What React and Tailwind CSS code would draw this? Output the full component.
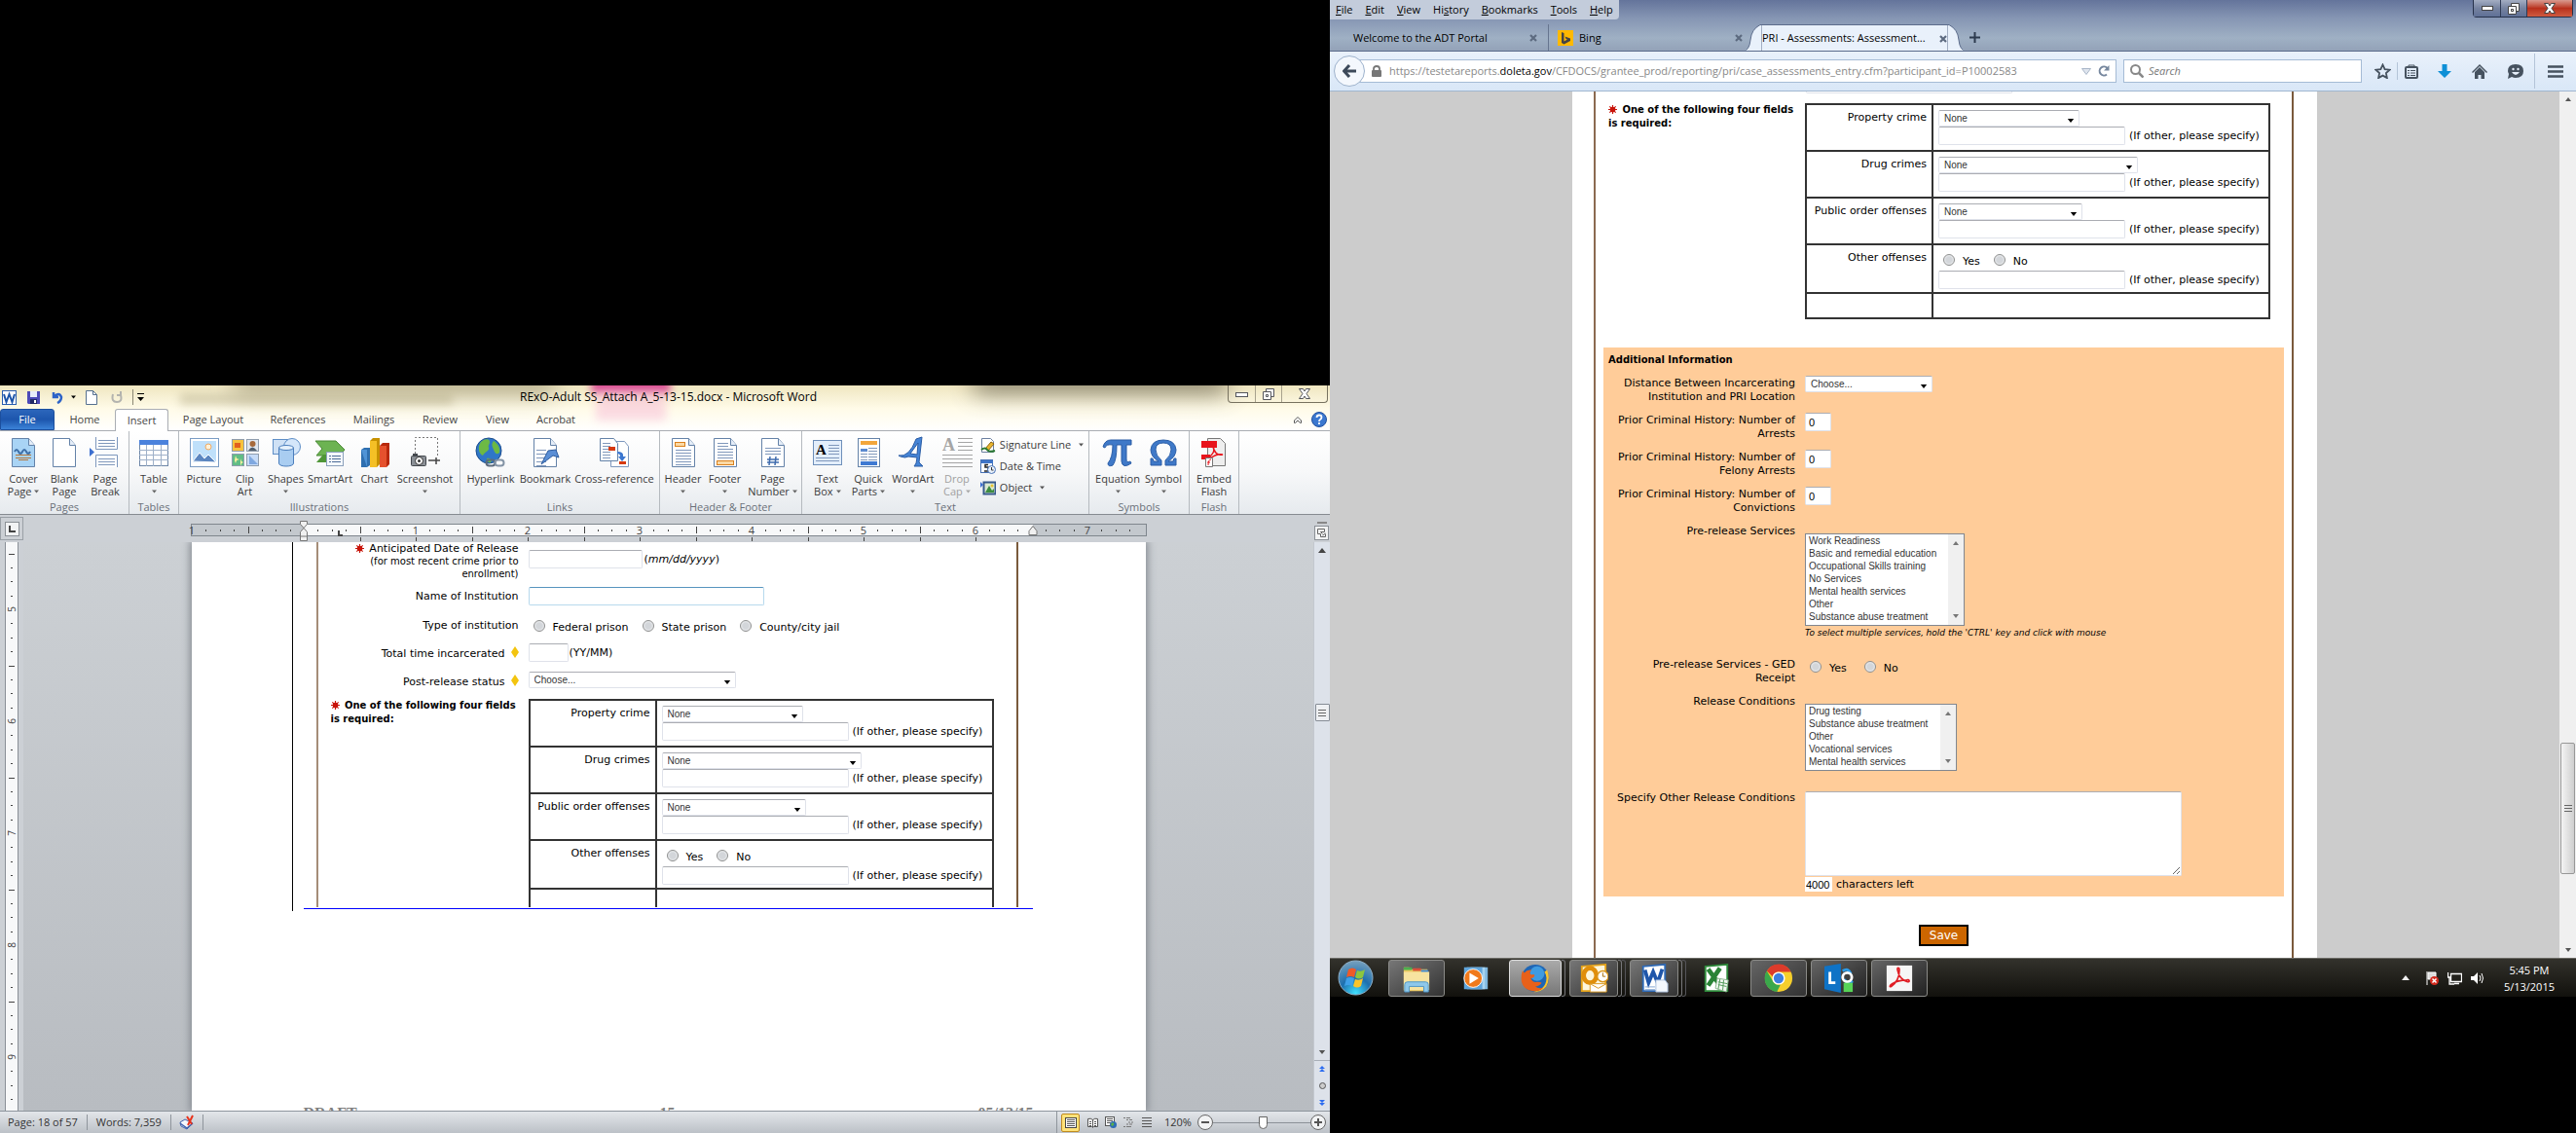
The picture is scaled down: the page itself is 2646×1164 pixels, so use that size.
import React from "react";

const SEGOE = "font-['Open_Sans','Noto_Sans',sans-serif]";
const VERDANA = "font-['DejaVu_Sans',sans-serif]";

/* ---------- small shared pieces ---------- */

function Down({ className = "text-[#555]", size = 5 }) {
    return (
        <svg width={size} height="4" viewBox="0 0 8 5" className={className}>
            <path d="M0 0h8L4 5z" fill="currentColor" />
        </svg>
    );
}

function Paper({ children, fill = "#fff" }) {
    return (
        <>
            <path d="M4.500 1.500h17l6 7v22h-23z" fill={fill} stroke="#6482a8" />
            <path d="M21.500 1.500v7h6" fill="#e4edf8" stroke="#6482a8" />
            {children}
        </>
    );
}

function Lines({ x, y, w, n, gap = 3, color = "#7f97bb" }) {
    return Array.from({ length: n }, (_, i) => (
        <rect key={i} x={x} y={y + i * gap} width={w} height="1" fill={color} />
    ));
}

const ICONS = {
    cover: (
        <Paper fill="#a9d4f5">
            <path d="M7 15q2-4 4 0t4 0 4 0 4 0" fill="none" stroke="#3d6fa8" strokeWidth="2" />
            <Lines x={8} y={18} w={16} n={2} color="#b5763a" />
            <rect x="11" y="23" width="10" height="1" fill="#b5763a" />
        </Paper>
    ),
    blank: <Paper />,
    break: (
        <>
            <path d="M6.500 0v12.500h22V0M6.500 31V18.500h22V31" fill="#fff" stroke="#7d97bd" />
            <Lines x={9} y={3} w={17} n={3} />
            <Lines x={9} y={22} w={17} n={3} />
            <path d="M0 11l5 4.500L0 20z" fill="#3c6fd0" />
        </>
    ),
    table: (
        <>
            <rect x="1.500" y="3.500" width="29" height="26" fill="#fff" stroke="#6e87a8" />
            <rect x="1" y="3" width="30" height="5" fill="#4b82dc" />
            <path d="M1 13.500h30M1 18.500h30M1 23.500h30M8.500 8v22M15.500 8v22M23.500 8v22" stroke="#9fb1c9" />
        </>
    ),
    picture: (
        <>
            <rect x="1.500" y="1.500" width="29" height="29" fill="#fff" stroke="#7b9cc4" />
            <rect x="4" y="4" width="24" height="22" fill="#bfe0fa" />
            <circle cx="20" cy="10" r="3" fill="#fff2d8" stroke="#f0a860" />
            <path d="M4 25l7-9 5 6 4-4 8 8z" fill="#5b86c0" stroke="#fff" />
        </>
    ),
    clip: (
        <>
            <rect x="2.500" y="2.500" width="12" height="12" fill="#f6c23c" stroke="#8f9dae" />
            <rect x="5" y="6" width="6" height="5" fill="#e2601d" />
            <rect x="17.500" y="2.500" width="12" height="12" fill="#dfe6ee" stroke="#8f9dae" />
            <circle cx="23.500" cy="7" r="3" fill="#a66a3b" />
            <path d="M19 14q4-7 9 0z" fill="#51606f" />
            <rect x="2.500" y="17.500" width="12" height="12" fill="#61bd86" stroke="#8f9dae" />
            <path d="M6 19l1 3 3 1-3 1-1 3-1-3M11 22l1 3 2 1-2 1-1 3" fill="#fff3a0" />
            <rect x="17.500" y="17.500" width="12" height="12" fill="#c6dbf7" stroke="#8f9dae" />
            <path d="M20 19v9h9z" fill="#7fa8e0" />
        </>
    ),
    shapes: (
        <>
            <rect x="2.500" y="2.500" width="15" height="15" fill="#cfe1f5" stroke="#5f8fc7" />
            <circle cx="22" cy="10" r="8.500" fill="#d4e6fa" stroke="#5f8fc7" />
            <path d="M8.500 11v16c0 4 15 4 15 0V11" fill="#a9cdf1" stroke="#4c7fbd" />
            <ellipse cx="16" cy="11" rx="7.500" ry="2.500" fill="#e6f1fc" stroke="#4c7fbd" />
        </>
    ),
    smart: (
        <>
            <path d="M1 4h21l9 9-5 6H2l6-7z" fill="#6cb352" stroke="#4a8a36" />
            <path d="M2 26l7-8h14v8z" fill="#4f9638" />
            <rect x="12.500" y="15.500" width="17" height="14" fill="#f4f8fd" stroke="#8ba0bb" />
            <Lines x={18} y={19} w={9} n={3} color="#4d6b96" />
            <Lines x={15} y={19} w={2} n={3} color="#4d6b96" />
        </>
    ),
    chart: (
        <>
            <path d="M2 13l3-2h6v18l-3 2H2z" fill="#2e6fb0" />
            <path d="M2 13h6v18" fill="#4f93d6" />
            <path d="M11 4l3-3h7v27l-3 3h-7z" fill="#c79100" />
            <path d="M11 4h7v27h-7z" fill="#f5c026" />
            <path d="M21 9l3-3h7v22l-3 3h-7z" fill="#b8290c" />
            <path d="M21 9h7v22h-7z" fill="#e5512d" />
        </>
    ),
    shot: (
        <>
            <path d="M5.500 17V.500h23v19" fill="none" stroke="#777" strokeDasharray="2 2" />
            <rect x="1.500" y="19.500" width="15" height="10" rx="1" fill="#8b9096" stroke="#44484d" />
            <rect x="3" y="17" width="5" height="3" fill="#44484d" />
            <circle cx="9.500" cy="24.500" r="4" fill="#fff" stroke="#333" />
            <circle cx="9.500" cy="24.500" r="1.500" fill="#333" />
            <path d="M19 24h8M27 21v7M24 24h7" stroke="#444" strokeWidth="1.500" />
        </>
    ),
    globe: (
        <>
            <circle cx="14" cy="14" r="13" fill="#2f77c8" stroke="#1b4c8c" />
            <path d="M6 5c5-4 9-3 9 0s-2 3-1 6-4 4-6 8c-4-2-6-8-2-14zM19 4c5 3 7 8 6 12-3 3-5 0-6-3s-3-5 0-9zM12 22c3-1 6 1 4 4-2 1-4-1-4-4z" fill="#6db944" />
            <rect x="11.500" y="23.500" width="9" height="6" rx="3" fill="none" stroke="#5d6b7c" strokeWidth="2" />
            <rect x="20.500" y="23.500" width="9" height="6" rx="3" fill="none" stroke="#8494a6" strokeWidth="2" />
        </>
    ),
    bookmark: (
        <Paper>
            <Lines x={7} y={13} w={10} n={5} gap={4} />
            <path d="M12 28l7-14 8-1 3 8-6-2z" fill="#5b8fd6" stroke="#2d5c9f" />
        </Paper>
    ),
    cross: (
        <>
            <path d="M12.500 4.500h14l4 5v21h-18z" fill="#fff" stroke="#7d97bd" />
            <path d="M1.500 1.500h14l4 5v18h-18z" fill="#fff" stroke="#6482a8" />
            <Lines x={4} y={6} w={8} n={6} />
            <rect x="10" y="10" width="7" height="4" fill="#d63a10" />
            <rect x="21" y="25" width="7" height="3" fill="#d63a10" />
            <path d="M19 15q7 0 6 5h3l-4 5-4-5h2q0-3-3-3z" fill="#3c77d0" />
        </>
    ),
    header: (
        <Paper>
            <rect x="7.500" y="5.500" width="10" height="4" fill="#fbd9a5" stroke="#d9801c" />
            <Lines x={8} y={13} w={16} n={6} />
        </Paper>
    ),
    footer: (
        <Paper>
            <Lines x={8} y={6} w={11} n={2} />
            <Lines x={8} y={12} w={16} n={4} />
            <rect x="7.500" y="24.500" width="17" height="4" fill="#fbd9a5" stroke="#d9801c" />
        </Paper>
    ),
    number: (
        <Paper>
            <Lines x={8} y={11} w={16} n={3} />
            <path d="M13 20l-1 9M19 20l-1 9M10 23h12M10 26h12" stroke="#3f6cae" strokeWidth="1.500" />
        </Paper>
    ),
    textbox: (
        <>
            <rect x="1.500" y="3.500" width="29" height="25" fill="#e3eefb" stroke="#6e8fba" />
            <text x="4" y="18" fontSize="15" fontWeight="bold" className="font-['Liberation_Serif',serif]">A</text>
            <Lines x={17} y={8} w={11} n={4} />
            <Lines x={4} y={21} w={24} n={2} />
        </>
    ),
    quick: (
        <>
            <rect x="5.500" y="1.500" width="22" height="29" fill="#fff" stroke="#6482a8" />
            <rect x="8" y="4" width="17" height="4" fill="#f3a63b" />
            <rect x="8" y="12" width="7" height="3" fill="#5b8ad0" />
            <Lines x={16} y={11} w={9} n={5} />
            <Lines x={8} y={17} w={7} n={3} />
            <rect x="8" y="25" width="17" height="4" fill="#3f79d2" />
        </>
    ),
    wordart: (
        <path d="M1 19q11 2 18-17l6-2-3 26 4 4h-9l2-3 1-6-9-1q-3 2-8 0zM13 17l7 1 1-12z" fill="#4584d6" stroke="#2a5ca5" fillRule="evenodd" />
    ),
    drop: (
        <>
            <text x="1" y="14" fontSize="18" fontWeight="bold" fill="#a5a5a5" className="font-['Liberation_Serif',serif]">A</text>
            <Lines x={17} y={1} w={15} n={4} gap={4} color="#a5a5a5" />
            <Lines x={1} y={18} w={31} n={4} gap={4} color="#a5a5a5" />
        </>
    ),
    pi: (
        <path d="M1 10Q3 3 9 3h21v5h-5v15q0 4 4 2l1 2q-9 6-10-2V8h-5q0 16-4 21-5 2-5-2 5-6 5-19Q4 7 3 11z" fill="#3f79c8" stroke="#2b5da6" />
    ),
    omega: (
        <path d="M3 29v-7h2l1 3h5Q3 20 3 13 4 3 16 3t13 10q0 7-8 12h5l1-3h2v7H18v-5q6-5 6-11 0-7-8-7t-8 7q0 6 6 11v5z" fill="#3f79c8" stroke="#2b5da6" />
    ),
    flash: (
        <>
            <path d="M9.500 1.500h13l5 5v23h-18z" fill="#eee" stroke="#777" />
            <rect x="3" y="4" width="16" height="7" fill="#e8141c" />
            <path d="M12 20c4-4 5-7 3-10 2 8 6 9 10 8-5-1-9 1-13 4z" fill="none" stroke="#e8141c" strokeWidth="1.500" />
            <rect x="3" y="18" width="9" height="5" fill="#e8141c" />
            <path d="M7.500 21.500h7v9h-7z" fill="#fff" stroke="#777" />
            <path d="M13 23q-3 0-3 6M9 26h3" stroke="#e8141c" fill="none" />
        </>
    ),
};

/* ---------- crime table, shown both in the document and in the browser ---------- */

function Select({ id, label, width, value }) {
    return (
        <span className={`relative block h-[17px] ${width}`}>
            <select
                id={id}
                aria-label={label}
                className="block h-full w-full appearance-none rounded-[2px] border border-[#dfe2ea] border-t-[#abadb3] bg-white pl-[5px] font-['Liberation_Sans',sans-serif] text-[10px] leading-[13px] text-[#333]"
            >
                <option>{value}</option>
            </select>
            <span className="pointer-events-none absolute right-[5px] bottom-[4px] leading-none">
                <Down size={8} className="text-black" />
            </span>
        </span>
    );
}

function TextBox({ id, label, width, value = "" }) {
    return (
        <input
            id={id}
            type="text"
            aria-label={label}
            defaultValue={value}
            className={`block h-[19px] rounded-[2px] border border-[#dfe2ea] border-t-[#abadb3] bg-white px-[3px] font-['Liberation_Sans',sans-serif] text-[11px] text-black ${width}`}
        />
    );
}

function Radio({ name, children }) {
    return (
        <label className="flex items-center gap-2">
            <input
                type="radio"
                name={name}
                className="mb-1 size-[12px] appearance-none rounded-full border border-[#8e8f8f] bg-radial from-[#d3d6da] from-40% to-white"
            />
            <span>{children}</span>
        </label>
    );
}

function Star() {
    return (
        <svg width="9" height="9" viewBox="0 0 10 10" className="mr-[2px] mb-[2px] inline-block" stroke="#c8140a" strokeWidth="1.300">
            <path d="M5 0v10M0 5h10M1.500 1.500l7 7M8.500 1.500l-7 7" />
            <circle cx="5" cy="5" r="2.500" fill="#c8140a" />
        </svg>
    );
}

function RequiredNote() {
    return (
        <p className="text-[10px] leading-[14px] font-bold">
            <Star /> One of the following four fields<br />is required:
        </p>
    );
}

const CRIMES = [
    { key: "property", label: "Property crime", width: "w-[145px]" },
    { key: "drug", label: "Drug crimes", width: "w-[205px]" },
    { key: "public", label: "Public order offenses", width: "w-[148px]" },
    { key: "other", label: "Other offenses", width: null },
];

function CrimeTable({ prefix }) {
    return (
        <table className="w-[478px] table-fixed border-collapse border-2 border-[#333] text-[11px] leading-[14px]">
            <colgroup>
                <col className="w-[130px]" />
                <col />
            </colgroup>
            <tbody>
                {CRIMES.map((c) => (
                    <tr key={c.key} className={c.width ? "h-[48px] align-top" : "h-[50px] align-top"}>
                        <th scope="row" className="border-2 border-[#333] pt-[6px] pr-[5px] text-right font-normal whitespace-nowrap">
                            <label htmlFor={`${prefix}-${c.key}`}>{c.label}</label>
                        </th>
                        <td className="border-2 border-[#333] pt-[5px] pl-[5px]">
                            {c.width ? (
                                <Select id={`${prefix}-${c.key}`} label={c.label} width={c.width} value="None" />
                            ) : (
                                <div className="flex gap-[14px] pt-[4px] pb-px pl-[5px]">
                                    <Radio name={`${prefix}-offense`}>Yes</Radio>
                                    <Radio name={`${prefix}-offense`}>No</Radio>
                                </div>
                            )}
                            <div className="flex items-center gap-[4px]">
                                <TextBox id={c.width ? undefined : `${prefix}-other`} label={`${c.label}, other`} width="w-[192px]" />
                                <span className="whitespace-nowrap">(If other, please specify)</span>
                            </div>
                        </td>
                    </tr>
                ))}
                <tr className="h-[26px]">
                    <td className="border-2 border-[#333]" />
                    <td className="border-2 border-[#333]" />
                </tr>
            </tbody>
        </table>
    );
}

/* ---------- Word window ---------- */

function WordTitle() {
    return (
        <div className="relative flex h-[47px] flex-col overflow-hidden bg-linear-to-b from-[#efe6c0] via-[#fffbe8] to-white">
            <div className="absolute -top-3 left-[240px] h-5 w-[330px] bg-[#8a8468] opacity-70 blur-md" />
            <div className="absolute -top-4 left-[1000px] h-6 w-[260px] bg-[#6b6655] opacity-80 blur-md" />
            <div className="absolute -top-3 left-[608px] h-5 w-[80px] bg-[#d01c80] opacity-80 blur-[4px]" />
            <div className="absolute top-1 left-[612px] h-8 w-[72px] bg-[#f7b9d6] opacity-50 blur-[5px]" />
            <div className="absolute top-2 left-[185px] h-3 w-[280px] bg-[#b8b08c] opacity-50 blur-[5px]" />
            <div className="relative flex h-6 items-center">
                <div className="flex items-center gap-[10px] pl-[2px]">
                    <svg width="15" height="15" viewBox="0 0 15 15">
                        <rect x=".500" y=".500" width="14" height="14" fill="#fff" stroke="#2b5fb0" />
                        <path d="M2 4l2.500 8L7.500 4l3 8L13 4" fill="none" stroke="#1d55a8" strokeWidth="2" />
                    </svg>
                    <button aria-label="Save">
                        <svg width="15" height="15" viewBox="0 0 15 15">
                            <path d="M1 1h13v13H2l-1-1z" fill="#4c49b8" />
                            <path d="M4 1h7v6H4z" fill="#e8ecfa" />
                            <path d="M4 9h7v5H4z" fill="#222a66" />
                            <path d="M8 10h2v3H8z" fill="#fff" />
                        </svg>
                    </button>
                    <button aria-label="Undo" className="flex items-center gap-2">
                        <svg width="13" height="13" viewBox="0 0 13 13">
                            <path d="M3 1v5h5M3 6q6-6 8 0 0 4-4 6" fill="none" stroke="#2d63c8" strokeWidth="2.500" />
                        </svg>
                        <Down className="text-black" />
                    </button>
                    <button aria-label="New">
                        <svg width="12" height="15" viewBox="0 0 12 15">
                            <path d="M.500 .500h7l4 4v10H.500z" fill="#fff" stroke="#56708f" />
                            <path d="M7.500 .500v4h4" fill="none" stroke="#56708f" />
                        </svg>
                    </button>
                    <button aria-label="Repeat" className="pl-1">
                        <svg width="12" height="13" viewBox="0 0 12 13">
                            <path d="M2 3q-2 8 4 8t4-7M6 4h4V0" fill="none" stroke="#b3b3ae" strokeWidth="2" />
                        </svg>
                    </button>
                    <span className="flex h-4 items-center border-l border-[#8b8874] pl-1">
                        <svg width="7" height="8" viewBox="0 0 7 8">
                            <path d="M0 0h7v1H0zM0 4h7L3.500 8z" />
                        </svg>
                    </span>
                </div>
                <h1 className="grow pr-9 text-center text-[12px] text-black">RExO-Adult SS_Attach A_5-13-15.docx - Microsoft Word</h1>
                <div className="mr-[2px] flex h-[18px] self-start rounded-b border border-t-0 border-[#77725f] text-[#55565c]">
                    <button aria-label="Minimize" className="flex w-[28px] items-center justify-center border-r border-[#a8a28d]">
                        <svg width="13" height="6" viewBox="0 0 13 6"><rect x=".500" y="1.500" width="12" height="4" fill="#fff" stroke="currentColor" /></svg>
                    </button>
                    <button aria-label="Restore" className="flex w-[27px] items-center justify-center border-r border-[#a8a28d]">
                        <svg width="12" height="12" viewBox="0 0 12 12" fill="#fff" stroke="currentColor"><path d="M3.500 .500h8v8h-8z" /><path d="M.500 3.500h8v8h-8zM3.500 6.500h2v2h-2z" /></svg>
                    </button>
                    <button aria-label="Close" className="flex w-[46px] items-center justify-center">
                        <svg width="12" height="11" viewBox="0 0 12 11"><path d="M.500 .500h4L6 3 7.500.500h4L8 5.500l3.500 5h-4L6 8l-1.500 2.500h-4L4 5.500z" fill="#fff" stroke="currentColor" /></svg>
                    </button>
                </div>
            </div>
            <nav className="relative flex grow items-stretch border-b border-[#a9adb3] text-[11px] text-[#444]">
                <button className="w-[56px] rounded-t-[3px] border border-[#1c4f9e] bg-linear-to-b from-[#2c66bb] via-[#1d56ad] to-[#3c83d8] text-white">File</button>
                <button className="w-[62px]">Home</button>
                <button className="-mb-px w-[55px] rounded-t-[3px] border border-b-0 border-[#a9adb3] bg-white">Insert</button>
                <button className="w-[92px]">Page Layout</button>
                <button className="w-[82px]">References</button>
                <button className="w-[74px]">Mailings</button>
                <button className="w-[62px]">Review</button>
                <button className="w-[56px]">View</button>
                <button className="w-[64px]">Acrobat</button>
                <div className="ml-auto flex items-center gap-[10px] pr-[3px]">
                    <button aria-label="Minimize the ribbon">
                        <svg width="8" height="7" viewBox="0 0 8 7" fill="#fff" stroke="#555"><path d="M4 .500L.500 4v2.500h1L4 4l2.500 2.500h1V4z" /></svg>
                    </button>
                    <button aria-label="Help">
                        <svg width="16" height="16" viewBox="0 0 16 16">
                            <circle cx="8" cy="8" r="7.500" fill="#3b78cf" stroke="#1f4f9e" />
                            <path d="M5.500 6q0-2.500 2.500-2.500t2.500 2.200Q10.500 7 9 8q-1 .600-1 2M8 11v2" fill="none" stroke="#fff" strokeWidth="1.800" />
                        </svg>
                    </button>
                </div>
            </nav>
        </div>
    );
}

function RibbonButton({ icon, lines, width, arrow, disabled }) {
    return (
        <button className={`flex flex-col items-center pt-[6px] leading-[13px] ${width} ${disabled ? "text-[#a0a0a0]" : "text-[#3b3b3b]"}`}>
            <svg width="32" height="32" viewBox="0 0 32 32" className="mb-1 overflow-visible">{ICONS[icon]}</svg>
            <span className="whitespace-nowrap">{lines[0]}</span>
            <span className="flex h-[13px] items-center gap-[3px]">
                {lines[1]}
                {arrow && <Down className={disabled ? "text-[#aaa]" : "text-[#666]"} />}
            </span>
        </button>
    );
}

const RIBBON = [
    {
        name: "Pages", width: "w-[133px]",
        items: [
            { icon: "cover", lines: ["Cover", "Page"], arrow: true, width: "w-[42px]" },
            { icon: "blank", lines: ["Blank", "Page"], width: "w-[42px]" },
            { icon: "break", lines: ["Page", "Break"], width: "w-[42px]" },
        ],
    },
    { name: "Tables", width: "w-[51px]", items: [{ icon: "table", lines: ["Table"], arrow: true, width: "w-[44px]" }] },
    {
        name: "Illustrations", width: "w-[289px]",
        items: [
            { icon: "picture", lines: ["Picture"], width: "w-[42px]" },
            { icon: "clip", lines: ["Clip", "Art"], width: "w-[42px]" },
            { icon: "shapes", lines: ["Shapes"], arrow: true, width: "w-[42px]" },
            { icon: "smart", lines: ["SmartArt"], width: "w-[49px]" },
            { icon: "chart", lines: ["Chart"], width: "w-[42px]" },
            { icon: "shot", lines: ["Screenshot"], arrow: true, width: "w-[62px]" },
        ],
    },
    {
        name: "Links", width: "w-[205px]",
        items: [
            { icon: "globe", lines: ["Hyperlink"], width: "w-[54px]" },
            { icon: "bookmark", lines: ["Bookmark"], width: "w-[58px]" },
            { icon: "cross", lines: ["Cross-reference"], width: "w-[84px]" },
        ],
    },
    {
        name: "Header & Footer", width: "w-[146px]",
        items: [
            { icon: "header", lines: ["Header"], arrow: true, width: "w-[42px]" },
            { icon: "footer", lines: ["Footer"], arrow: true, width: "w-[44px]" },
            { icon: "number", lines: ["Page", "Number"], arrow: true, width: "w-[54px]" },
        ],
    },
    {
        name: "Text", width: "w-[295px]",
        items: [
            { icon: "textbox", lines: ["Text", "Box"], arrow: true, width: "w-[42px]" },
            { icon: "quick", lines: ["Quick", "Parts"], arrow: true, width: "w-[42px]" },
            { icon: "wordart", lines: ["WordArt"], arrow: true, width: "w-[50px]" },
            { icon: "drop", lines: ["Drop", "Cap"], arrow: true, disabled: true, width: "w-[40px]" },
        ],
    },
    {
        name: "Symbols", width: "w-[103px]",
        items: [
            { icon: "pi", lines: ["Equation"], arrow: true, width: "w-[50px]" },
            { icon: "omega", lines: ["Symbol"], arrow: true, width: "w-[44px]" },
        ],
    },
    { name: "Flash", width: "w-[51px]", items: [{ icon: "flash", lines: ["Embed", "Flash"], width: "w-[44px]" }] },
];

function TextCommands() {
    return (
        <div className="flex flex-col pt-[3px] pl-1 text-[#3b3b3b]">
            <button className="flex h-[22px] items-center gap-1">
                <svg width="16" height="15" viewBox="0 0 16 15">
                    <path d="M1.500 .500h9l3 3v11h-12z" fill="#fff" stroke="#6b7fa0" />
                    <path d="M5 11l6-7 3 2-6 7z" fill="#e8b52f" stroke="#8a6312" />
                    <path d="M1 12q4-3 6 0t8 1" stroke="#2c7a33" strokeWidth="2" fill="none" />
                </svg>
                Signature Line <span className="pl-1"><Down /></span>
            </button>
            <button className="flex h-[22px] items-center gap-1">
                <svg width="16" height="15" viewBox="0 0 16 15">
                    <rect x=".500" y=".500" width="12" height="13" fill="#fff" stroke="#4671b4" />
                    <rect x="1" y="1" width="12" height="3" fill="#3f75c8" />
                    <path d="M8 5.500H5v2.500h3v4H4" fill="none" stroke="#222" strokeWidth="1.500" />
                    <circle cx="11.500" cy="10.500" r="4" fill="#e9f1fb" stroke="#4671b4" />
                    <path d="M11.500 8v3h2" stroke="#333" fill="none" />
                </svg>
                Date &amp; Time
            </button>
            <button className="flex h-[22px] items-center gap-1">
                <svg width="16" height="15" viewBox="0 0 16 15">
                    <rect x="3.500" y="1.500" width="12" height="12" fill="#dce9d0" stroke="#385a8c" strokeWidth="2" />
                    <path d="M5 12l4-7 3 5 2-2v4z" fill="#3d8c41" />
                    <circle cx="12" cy="5" r="1.500" fill="#e8c32f" />
                    <path d="M0 1l3 3-3 3z" fill="#3c6fd0" />
                </svg>
                Object <span className="pl-1"><Down /></span>
            </button>
        </div>
    );
}

function Ribbon() {
    return (
        <div className="flex h-[86px] border-b border-[#868b91] bg-linear-to-b from-white via-[#f7f8f9] to-[#e6eaee] text-[11px]">
            {RIBBON.map((g) => (
                <section key={g.name} className={`flex flex-col justify-between border-r border-[#b5babf] ${g.width}`}>
                    <div className="flex justify-center">
                        {g.items.map((b) => (
                            <RibbonButton key={b.icon} {...b} />
                        ))}
                        {g.name === "Text" && <TextCommands />}
                    </div>
                    <h2 className="text-center leading-[15px] whitespace-nowrap text-[#6a7079]">{g.name}</h2>
                </section>
            ))}
        </div>
    );
}

const INCH = 115;
const EIGHTHS = Array.from({ length: 69 }, (_, i) => i - 8);

function HorizontalRuler() {
    return (
        <svg width="982" height="27" viewBox="0 0 982 27" className="mx-auto block overflow-visible" fontSize="11">
            <rect x=".500" y="8.500" width="981" height="12" fill="#c3c8cd" stroke="#7f868d" />
            <rect x="116" y="9" width="749" height="11" fill="#f7f8f9" />
            {EIGHTHS.map((k) => {
                const x = Math.round(116 + (k * INCH) / 8);
                if (k === 0 || x > 965) return null;
                if (k % 8 === 0) return <text key={k} x={x} y="19" textAnchor="middle" fill="#444">{Math.abs(k / 8)}</text>;
                const tall = k % 4 === 0;
                return <rect key={k} x={x} y={tall ? 11 : 14} width="1" height={tall ? 7 : 2} fill="#444" />;
            })}
            {EIGHTHS.filter((k) => k > 0 && k % 4 === 0 && k < 49).map((k) => (
                <rect key={k} x={Math.round(116 + (k * INCH) / 8)} y="22" width="1" height="4" fill="#444" />
            ))}
            <path d="M112.500 5.500h7v3l-3.500 4 3.500 4v9h-7v-9l3.500-4-3.500-4zM112.500 21h7" fill="#f0f0f0" stroke="#777" />
            <path d="M865 10.500l4 5v4h-8v-4z" fill="#f0f0f0" stroke="#777" />
            <path d="M152 15v5h4" fill="none" stroke="#444" strokeWidth="2" />
        </svg>
    );
}

function VerticalRuler() {
    const ticks = Array.from({ length: 44 }, (_, i) => i - 4);
    return (
        <div className="w-6 shrink-0 overflow-hidden bg-[#ccd0d5]">
            <svg width="24" height="584" viewBox="0 0 24 584" className="block" fontSize="10">
                <rect x="5.500" y="-1" width="13" height="586" fill="#f7f8f9" stroke="#8a9097" />
                {ticks.map((k) => {
                    const y = Math.round(69 + (k * INCH) / 8);
                    if (k % 8 === 0) {
                        return (
                            <text key={k} x="0" y="0" fill="#444" textAnchor="middle" transform={`translate(16 ${y}) rotate(-90)`}>
                                {5 + k / 8}
                            </text>
                        );
                    }
                    const tall = k % 4 === 0;
                    return <rect key={k} x={tall ? 9 : 11} y={y} width={tall ? 6 : 2} height="1" fill="#444" />;
                })}
            </svg>
        </div>
    );
}

function Diamond() {
    return (
        <svg width="8" height="12" viewBox="0 0 8 12" className="mb-[3px] ml-[6px] inline-block">
            <path d="M4 0l4 6-4 6-4-6z" fill="#f3c40f" />
        </svg>
    );
}

function DocRow({ label, htmlFor, height, pad = "pt-[3px]", children }) {
    return (
        <div className={`flex ${height}`}>
            <label htmlFor={htmlFor} className={`w-[206px] shrink-0 text-right ${pad}`}>{label}</label>
            <div className="ml-[10px] flex items-start">{children}</div>
        </div>
    );
}

function DocumentPage() {
    return (
        <article className={`mx-auto flex w-[980px] flex-col overflow-hidden bg-white text-[11px] leading-[14px] text-black shadow-[0_0_8px_2px_#868b92] ${VERDANA}`}>
            <div className="ml-[103px] w-fit border-l border-black pb-[2px] pl-[11px]">
                <div className="h-[377px] w-[749px] overflow-hidden border-b border-[#0000ff] pr-[15px] pl-[13px]">
                    <div className="h-[375px] overflow-hidden border-r-2 border-l-2 border-r-[#7a5a3c] border-l-[#a58d78]">
                        <DocRow
                            label={<>
                                <span className="block leading-[13px]"><Star /> Anticipated Date of Release</span>
                                <span className="block text-[10px] leading-[13px]">(for most recent crime prior to<br />enrollment)</span>
                            </>}
                            htmlFor="doc-date" height="h-[46px]" pad="pt-0"
                        >
                            <div className="flex items-center gap-[2px] pt-2">
                                <TextBox id="doc-date" width="w-[117px]" />
                                <span>(<i>mm/dd/yyyy</i>)</span>
                            </div>
                        </DocRow>
                        <DocRow label="Name of Institution" htmlFor="doc-name" height="h-[33px]">
                            <input id="doc-name" type="text" className="h-[19px] w-[242px] rounded-[2px] border border-[#b7d9ed] border-t-[#5795bf] bg-white" />
                        </DocRow>
                        <DocRow label="Type of institution" height="h-[25px]" pad="pt-0">
                            <div className="flex gap-[14px] pt-[1px] pl-[5px]">
                                <Radio name="doc-type">Federal prison</Radio>
                                <Radio name="doc-type">State prison</Radio>
                                <Radio name="doc-type">County/city jail</Radio>
                            </div>
                        </DocRow>
                        <DocRow label={<>Total time incarcerated<Diamond /></>} htmlFor="doc-time" height="h-[29px]">
                            <div className="flex items-center gap-px">
                                <TextBox id="doc-time" width="w-[41px]" />
                                <span>(YY/MM)</span>
                            </div>
                        </DocRow>
                        <DocRow label={<>Post-release status<Diamond /></>} htmlFor="doc-status" height="h-[28px]">
                            <Select id="doc-status" label="Post-release status" width="w-[213px]" value="Choose..." />
                        </DocRow>
                        <div className="flex items-start">
                            <div className="w-[216px] shrink-0 pl-[13px]"><RequiredNote /></div>
                            <CrimeTable prefix="doc" />
                        </div>
                    </div>
                </div>
            </div>
            <footer className="mt-auto flex h-[5px] justify-between overflow-hidden px-[115px] font-['Liberation_Serif',serif] text-[16px] leading-[16px] font-bold text-[#808080]">
                <span>DRAFT</span>
                <span>15</span>
                <span>05/13/15</span>
            </footer>
        </article>
    );
}

function WordScrollbar() {
    return (
        <div className="flex w-[17px] shrink-0 flex-col items-center border-l border-[#c3c8cf] bg-[#dde2ea]">
            <button aria-label="Scroll up" className="flex h-4 items-center">
                <svg width="8" height="5" viewBox="0 0 8 5"><path d="M4 0l4 5H0z" fill="#444" /></svg>
            </button>
            <div className="flex w-full grow flex-col items-center">
                <div className="grow-[151]" />
                <div className="flex h-[18px] w-[15px] flex-col items-center justify-center gap-[2px] rounded-[1px] border border-[#858c95] bg-[#eef0f3]">
                    <i className="h-px w-2 bg-[#666]" />
                    <i className="h-px w-2 bg-[#666]" />
                    <i className="h-px w-2 bg-[#666]" />
                </div>
                <div className="grow-[334]" />
            </div>
            <button aria-label="Scroll down" className="flex h-4 items-center"><Down size={8} /></button>
            <div className="flex h-[52px] w-full flex-col items-center justify-around border-t border-[#a9afb8]">
                <button aria-label="Previous page">
                    <svg width="6" height="6" viewBox="0 0 6 6"><path d="M3 0l3 3H0zM3 3l3 3H0z" fill="#2c6cf0" /></svg>
                </button>
                <button aria-label="Browse object" className="size-[7px] rounded-full border border-[#555] bg-[#ccc]" />
                <button aria-label="Next page">
                    <svg width="6" height="6" viewBox="0 0 6 6"><path d="M3 3l3-3H0zM3 6l3-3H0z" fill="#2c6cf0" /></svg>
                </button>
            </div>
        </div>
    );
}

function WordStatus() {
    return (
        <div className="flex h-[23px] items-center border-t border-[#8e959d] bg-linear-to-b from-[#e3e6ea] to-[#bcc1c7] text-[11px] text-[#333]">
            <span className="border-r border-[#8f959c] pr-[9px] pl-2">Page: 18 of 57</span>
            <span className="border-r border-[#8f959c] px-[9px]">Words: 7,359</span>
            <span className="border-r border-[#8f959c] px-2">
                <svg width="16" height="16" viewBox="0 0 16 16">
                    <path d="M1 8l5-3 8 4-6 6-6-3z" fill="#f4f7fc" stroke="#3f62ae" />
                    <path d="M1 9l7 5 6-5" fill="none" stroke="#3f62ae" strokeWidth="1.500" />
                    <path d="M8 2l5 8M14 1L9 11" stroke="#e8331c" strokeWidth="2" />
                </svg>
            </span>
            <div className="ml-auto flex h-full items-center border-l border-[#8f959c] pl-1 text-[#555]">
                <button aria-label="Print layout" className="mr-2 flex size-[19px] items-center justify-center rounded-[2px] border border-[#c08c20] bg-[#ffe27a]">
                    <svg width="12" height="11" viewBox="0 0 12 11"><rect x=".500" y=".500" width="11" height="10" fill="#fff" stroke="#444" /><Lines x={2} y={2} w={8} n={4} gap={2} color="#555" /></svg>
                </button>
                <button aria-label="Full screen reading" className="mr-[7px]">
                    <svg width="11" height="11" viewBox="0 0 11 11"><path d="M.500 1.500q3-1 5 1 2-2 5-1v8h-4l-1 1-1-1h-4zM5.500 2v8" fill="#fff" stroke="#555" /><Lines x={2} y={4} w={2} n={3} gap={2} color="#555" /><Lines x={7} y={4} w={2} n={3} gap={2} color="#555" /></svg>
                </button>
                <button aria-label="Web layout" className="mr-[7px]">
                    <svg width="12" height="12" viewBox="0 0 12 12"><rect x=".500" y=".500" width="9" height="9" fill="#fff" stroke="#555" /><Lines x={2} y={2} w={6} n={3} gap={2} color="#555" /><circle cx="8.500" cy="8.500" r="3.500" fill="#2f6db5" /><path d="M6 8q2-3 3-1t-2 3z" fill="#5ab04a" /></svg>
                </button>
                <button aria-label="Outline" className="mr-[9px]">
                    <svg width="10" height="10" viewBox="0 0 10 10"><path d="M0 .500h7M3 2.500h6M5 5h5M3 7h6M0 9.500h8" stroke="#777" strokeDasharray="2 1 9" /></svg>
                </button>
                <button aria-label="Draft" className="mr-[13px]">
                    <svg width="10" height="10" viewBox="0 0 10 10"><path d="M0 .500h10M0 3.500h10M0 6.500h10M0 9.500h10" stroke="#555" /></svg>
                </button>
                <span className="w-[34px] text-[#333]">120%</span>
                <button aria-label="Zoom out" className="flex size-4 items-center justify-center rounded-full border border-[#666] bg-[#f2f3f4]"><i className="h-[2px] w-2 bg-[#555]" /></button>
                <input type="range" aria-label="Zoom" defaultValue="52" className="h-4 w-[100px] appearance-none bg-[linear-gradient(#8b9097,#8b9097)] bg-[length:100%_1px] bg-center bg-no-repeat [&::-webkit-slider-thumb]:h-[13px] [&::-webkit-slider-thumb]:w-[9px] [&::-webkit-slider-thumb]:appearance-none [&::-webkit-slider-thumb]:rounded-b-[5px] [&::-webkit-slider-thumb]:border [&::-webkit-slider-thumb]:border-[#666] [&::-webkit-slider-thumb]:bg-white" />
                <button aria-label="Zoom in" className="mr-1 flex size-4 items-center justify-center rounded-full border border-[#666] bg-[#f2f3f4]">
                    <svg width="8" height="8" viewBox="0 0 8 8"><path d="M4 0v8M0 4h8" stroke="#555" strokeWidth="2" /></svg>
                </button>
            </div>
        </div>
    );
}

function WordWindow() {
    return (
        <div className={`flex min-h-screen min-w-0 flex-col bg-black pt-[396px] ${SEGOE}`}>
            <WordTitle />
            <Ribbon />
            <div className="flex h-[28px] bg-[#ccd0d5]">
                <div className="my-auto flex size-6 items-center justify-center border border-[#9aa0a6]">
                    <button aria-label="Tab stop" className="flex size-[15px] items-center justify-center border border-[#8b9096] bg-[#f2f3f4]">
                        <svg width="7" height="7" viewBox="0 0 7 7"><path d="M1 0v6h6" fill="none" stroke="#444" strokeWidth="2" /></svg>
                    </button>
                </div>
                <div className="flex grow flex-col justify-end"><HorizontalRuler /></div>
                <div className="flex w-[17px] flex-col items-center justify-end gap-[2px] pb-[2px]">
                    <i className="h-[2px] w-[10px] bg-[#888]" />
                    <button aria-label="View ruler" className="flex size-[15px] items-center justify-center border border-[#8b9096] bg-[#f2f3f4]">
                        <svg width="10" height="10" viewBox="0 0 10 10" fill="none" stroke="#666"><path d="M.500 .500v5h3v3h5v-3M.500.500h7v3h-4l2 2M5.500 7l3-2" /></svg>
                    </button>
                </div>
            </div>
            <div className="flex grow overflow-hidden bg-linear-to-b from-[#ccd0d4] to-[#b8bcc1]">
                <VerticalRuler />
                <div className="flex grow overflow-hidden"><DocumentPage /></div>
                <WordScrollbar />
            </div>
            <WordStatus />
        </div>
    );
}

/* ---------- Firefox window ---------- */

const MENUS = [["", "F", "ile"], ["", "E", "dit"], ["", "V", "iew"], ["Hi", "s", "tory"], ["", "B", "ookmarks"], ["", "T", "ools"], ["", "H", "elp"]];

function CloseX() {
    return (
        <button aria-label="Close tab">
            <svg width="8" height="8" viewBox="0 0 8 8"><path d="M1 1l6 6M7 1L1 7" stroke="#5d6b80" strokeWidth="2.200" /></svg>
        </button>
    );
}

function BrowserTop() {
    return (
        <div className="h-[53px] overflow-hidden border-b border-[#5c6c8c] bg-[linear-gradient(180deg,#64749b_0%,#8595b3_35%,#9fb0c4_75%,#93a2b8_100%)] text-[11px] text-black">
            <div className="flex h-5 justify-between">
                <div className="flex items-center gap-[13px] rounded-br bg-[#c3ccdb] px-[6px]">
                    {MENUS.map(([a, u, b]) => (
                        <button key={u + b}>{a}<span className="underline">{u}</span>{b}</button>
                    ))}
                </div>
                <div className="mr-[3px] flex h-[18px] rounded-b border border-t-0 border-[#26314a] text-white">
                    <button aria-label="Minimize" className="flex w-[28px] items-center justify-center border-r border-[#2f3b55] bg-linear-to-b from-[#a3adc2] via-[#7683a0] via-50% to-[#5f7096]">
                        <svg width="12" height="5" viewBox="0 0 12 5"><rect x=".500" y=".500" width="11" height="4" fill="#fff" stroke="#444" /></svg>
                    </button>
                    <button aria-label="Restore" className="flex w-[27px] items-center justify-center border-r border-[#2f3b55] bg-linear-to-b from-[#a3adc2] via-[#7683a0] via-50% to-[#5f7096]">
                        <svg width="12" height="12" viewBox="0 0 12 12" fill="#fff" stroke="#444"><path d="M3.500 .500h8v8h-8z" /><path d="M.500 3.500h8v8h-8zM3.500 6.500h2v2h-2z" fillRule="evenodd" /></svg>
                    </button>
                    <button aria-label="Close" className="flex w-[46px] items-center justify-center bg-linear-to-b from-[#d89a90] via-[#b8301c] via-50% to-[#cf5a40]">
                        <svg width="12" height="11" viewBox="0 0 12 11"><path d="M.500 .500h4L6 3 7.500.500h4L8 5.500l3.500 5h-4L6 8l-1.500 2.500h-4L4 5.500z" fill="#fff" stroke="#444" /></svg>
                    </button>
                </div>
            </div>
            <div className="flex h-[33px] items-end">
                <div className="flex h-7 w-[225px] items-center justify-between border-r border-[#66758f] pr-[11px] pl-6">
                    <span className="whitespace-nowrap">Welcome to the ADT Portal</span>
                    <CloseX />
                </div>
                <div className="flex h-7 w-[203px] items-center pr-1 pl-[9px]">
                    <svg width="16" height="16" viewBox="0 0 16 16" className="mr-[6px]">
                        <rect width="16" height="16" fill="#ffb900" />
                        <path d="M4 2l2.500 1v8.500L10 9.500 8.500 9l-1-2.500L13 8.500v2.500L6.500 14.500 4 13z" fill="#444" />
                    </svg>
                    <span className="grow">Bing</span>
                    <CloseX />
                </div>
                <div className="flex h-7">
                    <svg width="16" height="28" viewBox="0 0 16 28" className="shrink-0"><path d="M-4 28Q3 27 4 16T14 .500H16V28" fill="#e9f1fb" stroke="#5c6c8c" /></svg>
                    <div className="flex w-[190px] items-center justify-between border-t border-[#5c6c8c] bg-[#e9f1fb] whitespace-nowrap">
                        PRI - Assessments: Assessment... <CloseX />
                    </div>
                    <svg width="16" height="28" viewBox="0 0 16 28" className="shrink-0"><path d="M20 28Q13 27 12 16T2 .500H0V28" fill="#e9f1fb" stroke="#5c6c8c" /></svg>
                </div>
                <button aria-label="New tab" className="mb-[9px] ml-[7px]">
                    <svg width="11" height="11" viewBox="0 0 11 11"><path d="M5.500 0v11M0 5.500h11" stroke="#2d3a4e" strokeWidth="2" /></svg>
                </button>
            </div>
        </div>
    );
}

function BrowserToolbar() {
    return (
        <div className="flex h-[41px] items-center border-b border-[#a0b6d0] bg-linear-to-b from-[#e9f1fb] to-[#d9e7f7] text-[11px]">
            <button aria-label="Back" className="relative z-10 -mr-4 ml-1 flex size-8 shrink-0 items-center justify-center rounded-full border border-[#9db2cc] bg-[#f4f8fd]">
                <svg width="14" height="14" viewBox="0 0 14 14"><path d="M7 1L1.500 7 7 13M2 7h12" fill="none" stroke="#3d4a5a" strokeWidth="3" /></svg>
            </button>
            <form className="flex h-6 grow items-center border border-[#a5bbd5] bg-white pr-[6px] pl-[22px]">
                <svg width="10" height="12" viewBox="0 0 10 12" className="mr-2 shrink-0"><rect y="5" width="10" height="7" rx="1" fill="#777" /><path d="M2 6V3.500q0-2.500 3-2.500t3 2.500V6" fill="none" stroke="#777" strokeWidth="1.800" /></svg>
                <p className="grow whitespace-nowrap text-[#888]">
                    https://testetareports.<span className="text-black">doleta.gov</span>/CFDOCS/grantee_prod/reporting/pri/case_assessments_entry.cfm?participant_id=P10002583
                </p>
                <svg width="10" height="7" viewBox="0 0 10 7" className="mr-[7px]"><path d="M.500 .500h9L5 6.500z" fill="#dfe5ee" stroke="#a9b6c8" /></svg>
                <button type="button" aria-label="Reload">
                    <svg width="12" height="12" viewBox="0 0 12 12"><path d="M9 9.500A4.500 4.500 0 1 1 9.500 3" fill="none" stroke="#76879e" strokeWidth="2" /><path d="M11.500 0v5.500H6z" fill="#76879e" /></svg>
                </button>
            </form>
            <form className="mr-[13px] ml-[7px] flex h-6 w-[245px] items-center border border-[#a5bbd5] bg-white pl-[6px]">
                <svg width="14" height="14" viewBox="0 0 14 14" className="mr-[5px]"><circle cx="5.500" cy="5.500" r="4.500" fill="none" stroke="#888" strokeWidth="2" /><path d="M9 9l4.500 4.500" stroke="#888" strokeWidth="2.500" /></svg>
                <input type="text" aria-label="Search" placeholder="Search" className="min-w-0 grow placeholder:text-[#777] placeholder:italic" />
            </form>
            <div className="flex items-center text-[#46525f]">
                <button aria-label="Bookmark this page" className="mr-[6px]">
                    <svg width="17" height="16" viewBox="0 0 17 16"><path d="M8.500 1.500l2.100 4.600 5 .600-3.700 3.400 1 5-4.400-2.500-4.400 2.500 1-5L1.400 6.700l5-.600z" fill="none" stroke="currentColor" strokeWidth="1.800" /></svg>
                </button>
                <span className="mr-[7px] h-[18px] w-px bg-[#b4c4d8]" />
                <button aria-label="Bookmarks list" className="mr-[20px]">
                    <svg width="14" height="15" viewBox="0 0 14 15"><rect x="1" y="3" width="12" height="11" rx="1" fill="none" stroke="currentColor" strokeWidth="2" /><path d="M4 3V1h6v2M3 6.500h2M6 6.500h5M3 9h2M6 9h5M3 11.500h2M6 11.500h5" stroke="currentColor" fill="none" /></svg>
                </button>
                <button aria-label="Downloads" className="mr-[21px]">
                    <svg width="14" height="14" viewBox="0 0 14 14"><path d="M4.500 0h5v7H14l-7 7-7-7h4.500z" fill="#0d8fd6" /></svg>
                </button>
                <button aria-label="Home" className="mr-[20px]">
                    <svg width="16" height="15" viewBox="0 0 16 15"><path d="M8 0l8 8-1 1-7-7-7 7-1-1zM3 8l5-5 5 5v7H9.500v-4h-3v4H3z" fill="currentColor" /></svg>
                </button>
                <button aria-label="Chat" className="mr-[11px]">
                    <svg width="17" height="15" viewBox="0 0 17 15"><path d="M9 0q8 0 8 7t-8 7q-2 0-4-1l-4 2 1-5Q1 8 1 7q0-7 8-7z" fill="currentColor" /><path d="M5 8q4 6 8 0z" fill="#e4edf8" /><circle cx="6.500" cy="5" r="1.200" fill="#e4edf8" /><circle cx="11.500" cy="5" r="1.200" fill="#e4edf8" /></svg>
                </button>
                <span className="h-9 w-px bg-[#b4c4d8]" />
                <button aria-label="Menu" className="mr-[13px] ml-[13px]">
                    <svg width="16" height="13" viewBox="0 0 16 13"><path d="M0 1.500h16M0 6.500h16M0 11.500h16" stroke="currentColor" strokeWidth="2.500" /></svg>
                </button>
            </div>
        </div>
    );
}

function FormRow({ label, htmlFor, height, children }) {
    return (
        <div className={`flex ${height}`}>
            <label htmlFor={htmlFor} className="w-[197px] shrink-0 pt-[1px] text-right whitespace-nowrap">{label}</label>
            <div className="ml-[10px]">{children}</div>
        </div>
    );
}

function ListBox({ id, options, width, height }) {
    return (
        <div className={`flex border border-[#828790] bg-white ${width} ${height}`}>
            <select id={id} multiple className="min-w-0 grow overflow-hidden px-[2px] pt-px font-['Liberation_Sans',sans-serif] text-[10px] text-[#333] [scrollbar-width:none]">
                {options.map((o) => (
                    <option key={o} className="h-[13px] min-h-0 p-0 pl-px leading-[13px]">{o}</option>
                ))}
            </select>
            <div className="flex w-4 flex-col items-center justify-between bg-[#f0f0f0] py-[7px]">
                <svg width="6" height="4" viewBox="0 0 6 4"><path d="M3 0l3 4H0z" fill="#777" /></svg>
                <svg width="6" height="4" viewBox="0 0 6 4"><path d="M3 4l3-4H0z" fill="#777" /></svg>
            </div>
        </div>
    );
}

const SERVICES = ["Work Readiness", "Basic and remedial education", "Occupational Skills training", "No Services", "Mental health services", "Other", "Substance abuse treatment"];
const CONDITIONS = ["Drug testing", "Substance abuse treatment", "Other", "Vocational services", "Mental health services"];

function AdditionalInfo() {
    return (
        <section className="mx-2 h-[564px] bg-[#ffcc99] pt-[6px]">
            <h2 className="mb-[9px] pl-[5px] text-[10px] font-bold">Additional Information</h2>
            <FormRow label={<>Distance Between Incarcerating<br />Institution and PRI Location</>} htmlFor="distance" height="h-[38px]">
                <Select id="distance" label="Distance" width="w-[131px]" value="Choose..." />
            </FormRow>
            <FormRow label={<>Prior Criminal History: Number of<br />Arrests</>} htmlFor="arrests" height="h-[38px]">
                <TextBox id="arrests" width="w-[27px]" value="0" />
            </FormRow>
            <FormRow label={<>Prior Criminal History: Number of<br />Felony Arrests</>} htmlFor="felony" height="h-[38px]">
                <TextBox id="felony" width="w-[27px]" value="0" />
            </FormRow>
            <FormRow label={<>Prior Criminal History: Number of<br />Convictions</>} htmlFor="convictions" height="h-[38px]">
                <TextBox id="convictions" width="w-[27px]" value="0" />
            </FormRow>
            <FormRow label="Pre-release Services" htmlFor="services" height="h-[137px]">
                <div className="pt-[10px]">
                    <ListBox id="services" options={SERVICES} width="w-[164px]" height="h-[95px]" />
                    <p className="text-[9px] leading-[14px] italic">To select multiple services, hold the &#39;CTRL&#39; key and click with mouse</p>
                </div>
            </FormRow>
            <FormRow label={<>Pre-release Services - GED<br />Receipt</>} height="h-[38px]">
                <div className="flex gap-[18px] pt-[4px] pl-[5px]">
                    <Radio name="ged">Yes</Radio>
                    <Radio name="ged">No</Radio>
                </div>
            </FormRow>
            <FormRow label="Release Conditions" htmlFor="conditions" height="h-[99px]">
                <div className="pt-[10px]">
                    <ListBox id="conditions" options={CONDITIONS} width="w-[156px]" height="h-[69px]" />
                </div>
            </FormRow>
            <FormRow label="Specify Other Release Conditions" htmlFor="specify" height="h-[104px]">
                <textarea id="specify" className="mt-px block h-[87px] w-[387px] resize rounded-[2px] border border-[#dfe2ea] border-t-[#abadb3] bg-white" />
                <div className="flex items-center gap-1 pt-[1px]">
                    <input type="text" aria-label="Characters left" readOnly value="4000" className="h-[15px] w-7 bg-white pl-px font-['Liberation_Sans',sans-serif] text-[11px]" />
                    <span>characters left</span>
                </div>
            </FormRow>
        </section>
    );
}

function WebPage() {
    return (
        <div className="flex h-[890px] bg-[#cccccc]">
            <main className={`mx-auto w-[765px] bg-white pr-[24px] pl-[22px] text-[11px] leading-[14px] text-black ${VERDANA}`}>
                <div className="flex h-full flex-col border-r-2 border-l-2 border-r-[#7a5a3c] border-l-[#8b6a50]">
                    <div className="ml-[216px] h-[2px] w-[212px] rounded-b border border-t-0 border-[#dfe2ea]" />
                    <div className="flex h-[261px] items-start pt-[10px]">
                        <div className="w-[215px] shrink-0 pl-[13px]"><RequiredNote /></div>
                        <CrimeTable prefix="web" />
                    </div>
                    <AdditionalInfo />
                    <button className="mx-auto mt-[29px] h-[22px] w-[51px] border-2 border-black bg-[#cc6600] text-[12px] leading-none text-white">Save</button>
                </div>
            </main>
            <div className="flex w-[17px] flex-col items-center bg-[#f0f0f0] py-[6px]">
                <svg width="6" height="4" viewBox="0 0 6 4"><path d="M3 0l3 4H0z" fill="#555" /></svg>
                <div className="grow-[658]" />
                <div className="flex w-[15px] grow-[126] flex-col items-center justify-center gap-[2px] rounded-[2px] border border-[#979797] bg-linear-to-r from-[#f3f3f3] to-[#cfcfcf]">
                    <i className="h-px w-2 bg-[#666]" />
                    <i className="h-px w-2 bg-[#666]" />
                    <i className="h-px w-2 bg-[#666]" />
                </div>
                <div className="grow-[76]" />
                <svg width="6" height="4" viewBox="0 0 6 4"><path d="M3 4l3-4H0z" fill="#555" /></svg>
            </div>
        </div>
    );
}

/* ---------- taskbar ---------- */

const APPS = {
    explorer: (
        <>
            <path d="M2 4h6l2 2h18v24H2z" fill="#e9c75f" />
            <path d="M2 4h9v3H2z" fill="#4bb04f" /><path d="M12 5h9v3h-9z" fill="#d94f3a" /><path d="M21 7h8v3h-8z" fill="#3d86cf" />
            <path d="M2 9h28v20H2z" fill="#f7e3a0" />
            <path d="M3 31v-8q0-3 3-3h20q3 0 3 3v8h-5v-6H8v6z" fill="#8fc8ea" stroke="#4e94c4" />
        </>
    ),
    wmp: (
        <>
            <rect x="10" y="4" width="19" height="24" fill="#7fb8e0" /><rect x="6" y="4" width="20" height="24" fill="#a8d4f0" />
            <rect x="3" y="4" width="20" height="24" fill="#5fa5dc" />
            <circle cx="13" cy="16" r="10" fill="#f07a1c" stroke="#fff" /><path d="M9 10l10 6-10 6z" fill="#fff" />
        </>
    ),
    firefox: (
        <>
            <circle cx="16" cy="16" r="15" fill="#1f66b5" />
            <circle cx="18" cy="11" r="8" fill="#3f9be0" />
            <path d="M29 7q4 10-1 18-6 7-14 6 10-2 13-9 3-8-1-13z" fill="#fbc42a" />
            <path d="M2 8q1 0 2 2 3-4 8-3-3 3-1 5h4q1 3-4 4 2 5 7 4 4 0 5 1-3 4-7 4 4 3 9 1-4 5-11 4Q3 29 1 20 0 13 2 8z" fill="#e8611a" />
        </>
    ),
    outlook: (
        <>
            <path d="M3 3l26-2v29H3z" fill="#fdf6dc" stroke="#e3a21a" strokeWidth="2" />
            <ellipse cx="12" cy="13" rx="7" ry="8" fill="none" stroke="#e08e0b" strokeWidth="5" />
            <circle cx="26" cy="14" r="6" fill="#fff" stroke="#d9951a" strokeWidth="1.500" /><path d="M26 10v4h3" stroke="#a66a00" fill="none" />
            <path d="M12 22h18v9H12z" fill="#fff" stroke="#d9951a" /><path d="M12 22l9 5 9-5" fill="none" stroke="#d9951a" />
        </>
    ),
    word: (
        <>
            <path d="M4 3l24-2v29H4z" fill="#fff" stroke="#2e69b5" strokeWidth="2" />
            <path d="M6 7l4 14 5-12 5 12 5-15" fill="none" stroke="#1f56aa" strokeWidth="4" />
            <path d="M18 18h10l3 4v9H18z" fill="#f4f8fd" stroke="#a9bedb" /><Lines x={6} y={25} w={11} n={2} color="#7fa1cf" />
        </>
    ),
    excel: (
        <>
            <path d="M4 3l24-2v29H4z" fill="#fff" stroke="#2d8a3a" strokeWidth="2" />
            <path d="M7 6l13 18M20 5L7 24" stroke="#2a8336" strokeWidth="5" />
            <path d="M17 16l12 2-2 13-12-4z" fill="#f2f9f2" stroke="#87b48c" /><path d="M18 20l10 2M18 23l9 2M20 17l-2 11M24 18l-1 11" stroke="#4f9a57" />
        </>
    ),
    chrome: (
        <>
            <circle cx="16" cy="16" r="15" fill="#f6cf2b" />
            <path d="M3 8A15 15 0 0 1 29.500 9H16a7 7 0 0 0-6.500 5z" fill="#dd3b2b" />
            <path d="M3 8l6.500 11A7 7 0 0 0 18 23l-4 8A15 15 0 0 1 3 8z" fill="#3aa84b" />
            <circle cx="16" cy="16" r="7" fill="#fff" /><circle cx="16" cy="16" r="5.500" fill="#3e7fe0" />
        </>
    ),
    lync: (
        <>
            <path d="M0 3l18-3v32L0 28z" fill="#0f73c6" />
            <path d="M6 9v12h6" fill="none" stroke="#fff" strokeWidth="3" />
            <path d="M20 8q6-4 9 3M31 19q-6 5-9-2" fill="none" stroke="#2e9be6" strokeWidth="3" /><circle cx="25" cy="15" r="5" fill="none" stroke="#fff" strokeWidth="3" />
            <path d="M21 21h10v10H21z" fill="#57d457" />
        </>
    ),
    adobe: (
        <>
            <path d="M2 2h28v28H2z" fill="#f6f6f6" />
            <path d="M7 25c6-4 9-11 9-18 0-3-3-3-2 0 1 6 5 11 11 13 3 0 2-3-1-2-6 0-11 1-16 4-3 2-3 4-1 3z" fill="none" stroke="#e01e25" strokeWidth="1.800" />
        </>
    ),
};

const TASKS = [
    { app: "explorer", box: "w-[58px] border-[#8b8b88] bg-linear-to-br from-[#777] to-[#333]", gap: "ml-[15px]" },
    { app: "wmp", box: "w-[54px] border-transparent", gap: "ml-[5px]" },
    { app: "firefox", box: "w-[54px] border-[#ddd] bg-linear-to-b from-[#aaa] to-[#777]", gap: "ml-[7px]", stack: 1 },
    { app: "outlook", box: "w-[50px] border-[#8b8b88] bg-linear-to-br from-[#777] to-[#333]", gap: "ml-[4px]", stack: 2 },
    { app: "word", box: "w-[50px] border-[#8b8b88] bg-linear-to-br from-[#777] to-[#333]", gap: "ml-[4px]", stack: 2 },
    { app: "excel", box: "w-[58px] border-transparent", gap: "ml-[2px]" },
    { app: "chrome", box: "w-[58px] border-[#8b8b88] bg-linear-to-br from-[#666] to-[#333]", gap: "ml-[6px]" },
    { app: "lync", box: "w-[58px] border-[#8b8b88] bg-linear-to-br from-[#666] to-[#222]", gap: "ml-[4px]" },
    { app: "adobe", box: "w-[58px] border-[#8b8b88] bg-linear-to-br from-[#666] to-[#222]", gap: "ml-[4px]" },
];

function Taskbar() {
    return (
        <div className="flex h-10 items-center border-t border-[#6b6a64] bg-linear-to-b from-[#33322c] to-[#12110d] text-[11px] text-white">
            <button aria-label="Start" className="ml-2">
                <svg width="37" height="37" viewBox="0 0 37 37">
                    <defs>
                        <radialGradient id="orb" cx=".5" cy=".95" r=".9">
                            <stop offset="0" stopColor="#3fe0ff" />
                            <stop offset=".5" stopColor="#1d6fae" />
                            <stop offset="1" stopColor="#6f9cbc" />
                        </radialGradient>
                    </defs>
                    <circle cx="18.500" cy="18.500" r="17.500" fill="url(#orb)" stroke="#8fb0c8" />
                    <path d="M11 10q4-3 8 0l-2 8q-4-2-8 0z" fill="#ee5a28" />
                    <path d="M20 11q4 2 8-1l-2 8q-4 3-8 0z" fill="#8cc63e" />
                    <path d="M9 19q4-2 8 0l-2 8q-4-2-8 0z" fill="#3fa0e8" />
                    <path d="M18 20q4 2 8-1l-2 8q-4 3-8 0z" fill="#fbc42a" />
                </svg>
            </button>
            {TASKS.map((t) => (
                <div key={t.app} className={`flex ${t.gap}`}>
                    <button aria-label={t.app} className={`flex h-[38px] items-center justify-center rounded-[3px] border ${t.box}`}>
                        <svg width="30" height="30" viewBox="0 0 32 32">{APPS[t.app]}</svg>
                    </button>
                    {t.stack >= 1 && <i className="h-[38px] w-1 rounded-r-[3px] border border-l-0 border-[#77777a]" />}
                    {t.stack >= 2 && <i className="h-[38px] w-1 rounded-r-[3px] border border-l-0 border-[#55555a]" />}
                </div>
            ))}
            <div className="ml-auto flex items-center pr-[22px]">
                <svg width="8" height="5" viewBox="0 0 8 5" className="mr-4"><path d="M4 0l4 5H0z" fill="#eee" /></svg>
                <svg width="14" height="14" viewBox="0 0 14 14" className="mr-[9px]">
                    <path d="M2 0v14M3 1h8v7H3z" stroke="#fff" fill="#ddd" /><circle cx="9.500" cy="9.500" r="4.500" fill="#d42a1e" /><path d="M7.500 7.500l4 4M11.500 7.500l-4 4" stroke="#fff" strokeWidth="1.500" />
                </svg>
                <svg width="15" height="14" viewBox="0 0 15 14" className="mr-2" fill="none" stroke="#fff"><path d="M3.500 2.500h11v8h-11zM7 12.500h5M.500 1v5h3M2 6v7h5" strokeWidth="1.300" /></svg>
                <svg width="15" height="14" viewBox="0 0 15 14" className="mr-5"><path d="M1 5h3l4-4v12L4 9H1z" fill="#fff" /><path d="M10 4q2 3 0 6M12 2q3 5 0 10" stroke="#fff" fill="none" /></svg>
                <div className="text-center leading-[17px]">
                    <div>5:45 PM</div>
                    <div>5/13/2015</div>
                </div>
            </div>
        </div>
    );
}

export default function App() {
    return (
        <div className="grid min-h-screen grid-cols-[1366fr_1280fr] bg-black">
            <WordWindow />
            <div className={`min-w-0 ${SEGOE}`}>
                <BrowserTop />
                <BrowserToolbar />
                <WebPage />
                <Taskbar />
            </div>
        </div>
    );
}
